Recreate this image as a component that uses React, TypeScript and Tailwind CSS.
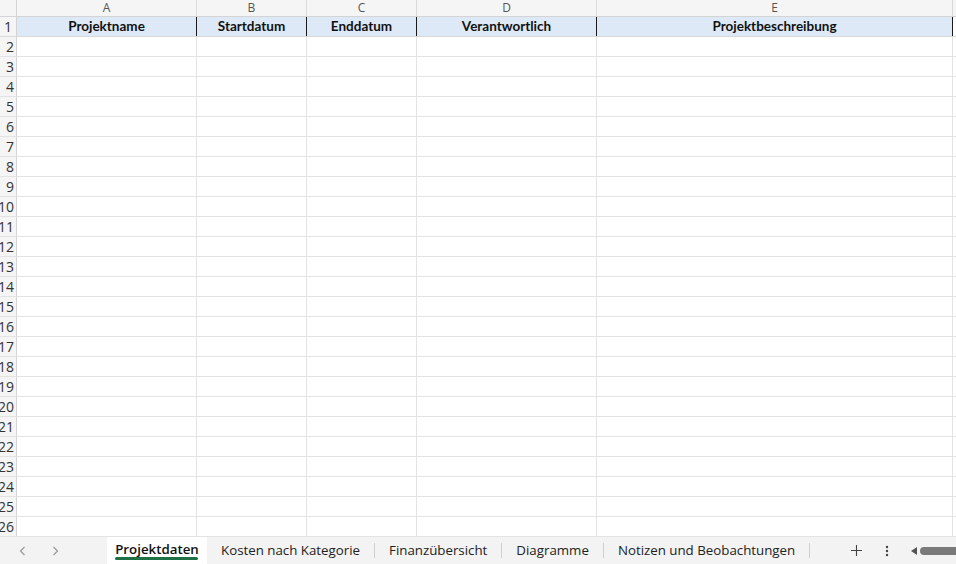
const cols = [
  { letter: "A", title: "Projektname", w: "w-[180px]" },
  { letter: "B", title: "Startdatum", w: "w-[110px]" },
  { letter: "C", title: "Enddatum", w: "w-[110px]" },
  { letter: "D", title: "Verantwortlich", w: "w-[180px]" },
  { letter: "E", title: "Projektbeschreibung", w: "w-[356px]" },
];

const tabs = [
  "Kosten nach Kategorie",
  "Finanzübersicht",
  "Diagramme",
  "Notizen und Beobachtungen",
];

const rows = Array.from({ length: 25 }, (_, i) => i + 2);

export default function App() {
  return (
    <div className="w-[956px] h-[564px] overflow-hidden bg-white flex flex-col font-['Lato','Liberation_Sans',sans-serif]">
      {/* column letters */}
      <div className="flex h-[17px] bg-[#f5f5f5] border-b border-[#d4d4d4] shrink-0">
        <div className="w-[17px] shrink-0 border-r border-[#d4d4d4]" />
        {cols.map((c) => (
          <div
            key={c.letter}
            className={`${c.w} shrink-0 border-r border-[#dadada] flex items-center justify-center text-[12px] leading-none text-[#555] font-['Open_Sans',sans-serif]`}
          >
            {c.letter}
          </div>
        ))}
        <div className="flex-1" />
      </div>

      {/* header row */}
      <div className="flex h-[20px] shrink-0 border-b border-[#d9d9d9]">
        <div className="w-[17px] shrink-0 bg-[#f5f5f5] border-r border-[#d4d4d4] overflow-hidden flex items-center justify-end pr-[4px] text-[14px] text-[#333] font-['Open_Sans',sans-serif]">
          1
        </div>
        {cols.map((c) => (
          <div
            key={c.letter}
            className={`${c.w} shrink-0 bg-[#dde9f6] border-r border-[#1a1a1a] flex items-center justify-center text-[13.5px] font-bold text-[#111]`}
          >
            {c.title}
          </div>
        ))}
        <div className="flex-1" />
      </div>

      {/* empty rows */}
      {rows.map((n) => (
        <div key={n} className="flex h-[20px] shrink-0 border-b border-[#e3e3e3]">
          <div className="w-[17px] shrink-0 bg-[#f5f5f5] border-r border-[#d4d4d4] overflow-hidden flex items-center justify-end pr-[2px] text-[14px] text-[#333] font-['Open_Sans',sans-serif] whitespace-nowrap">
            {n}
          </div>
          {cols.map((c) => (
            <div key={c.letter} className={`${c.w} shrink-0 border-r border-[#e3e3e3]`} />
          ))}
          <div className="flex-1" />
        </div>
      ))}

      {/* sheet tabs */}
      <div className="flex-1 flex items-stretch bg-[#f3f3f3] text-[13.3px] text-[#222] font-['Open_Sans',sans-serif]">
        <div className="w-[107px] shrink-0 flex items-center pl-[18px] gap-[22px] text-[#9a9a9a]">
          <svg width="10" height="12" viewBox="0 0 10 12" fill="none" stroke="currentColor" strokeWidth="1.2">
            <path d="M6.5 2 L2.5 6 L6.5 10" />
          </svg>
          <svg width="10" height="12" viewBox="0 0 10 12" fill="none" stroke="currentColor" strokeWidth="1.2">
            <path d="M3.5 2 L7.5 6 L3.5 10" />
          </svg>
        </div>
        <div className="w-[100px] shrink-0 bg-white flex flex-col items-center justify-center relative">
          <span className="font-semibold text-[#111] mt-[-1px]">Projektdaten</span>
          <div className="absolute bottom-[4px] left-[8px] right-[9px] h-[3px] rounded-full bg-[#1e7145]" />
        </div>
        {tabs.map((t) => (
          <div key={t} className="flex items-center shrink-0">
            <span className="px-[14px] whitespace-nowrap">{t}</span>
            <div className="w-px h-[15px] bg-[#cfcfcf]" />
          </div>
        ))}
        <div className="flex-1" />
        <div className="flex items-center gap-[22px] pr-0">
          <svg width="13" height="13" viewBox="0 0 13 13" stroke="#444" strokeWidth="1.1">
            <path d="M6.5 1 V12 M1 6.5 H12" />
          </svg>
          <svg width="4" height="12" viewBox="0 0 4 12" fill="#444">
            <circle cx="2" cy="2" r="1.2" />
            <circle cx="2" cy="6" r="1.2" />
            <circle cx="2" cy="10" r="1.2" />
          </svg>
          <div className="flex items-center gap-[3px]">
            <svg width="6" height="8" viewBox="0 0 6 8" fill="#555">
              <path d="M6 0 L0 4 L6 8 Z" />
            </svg>
            <div className="w-[36px] h-[8px] rounded-l-full bg-[#7a7a7a]" />
          </div>
        </div>
      </div>
    </div>
  );
}
